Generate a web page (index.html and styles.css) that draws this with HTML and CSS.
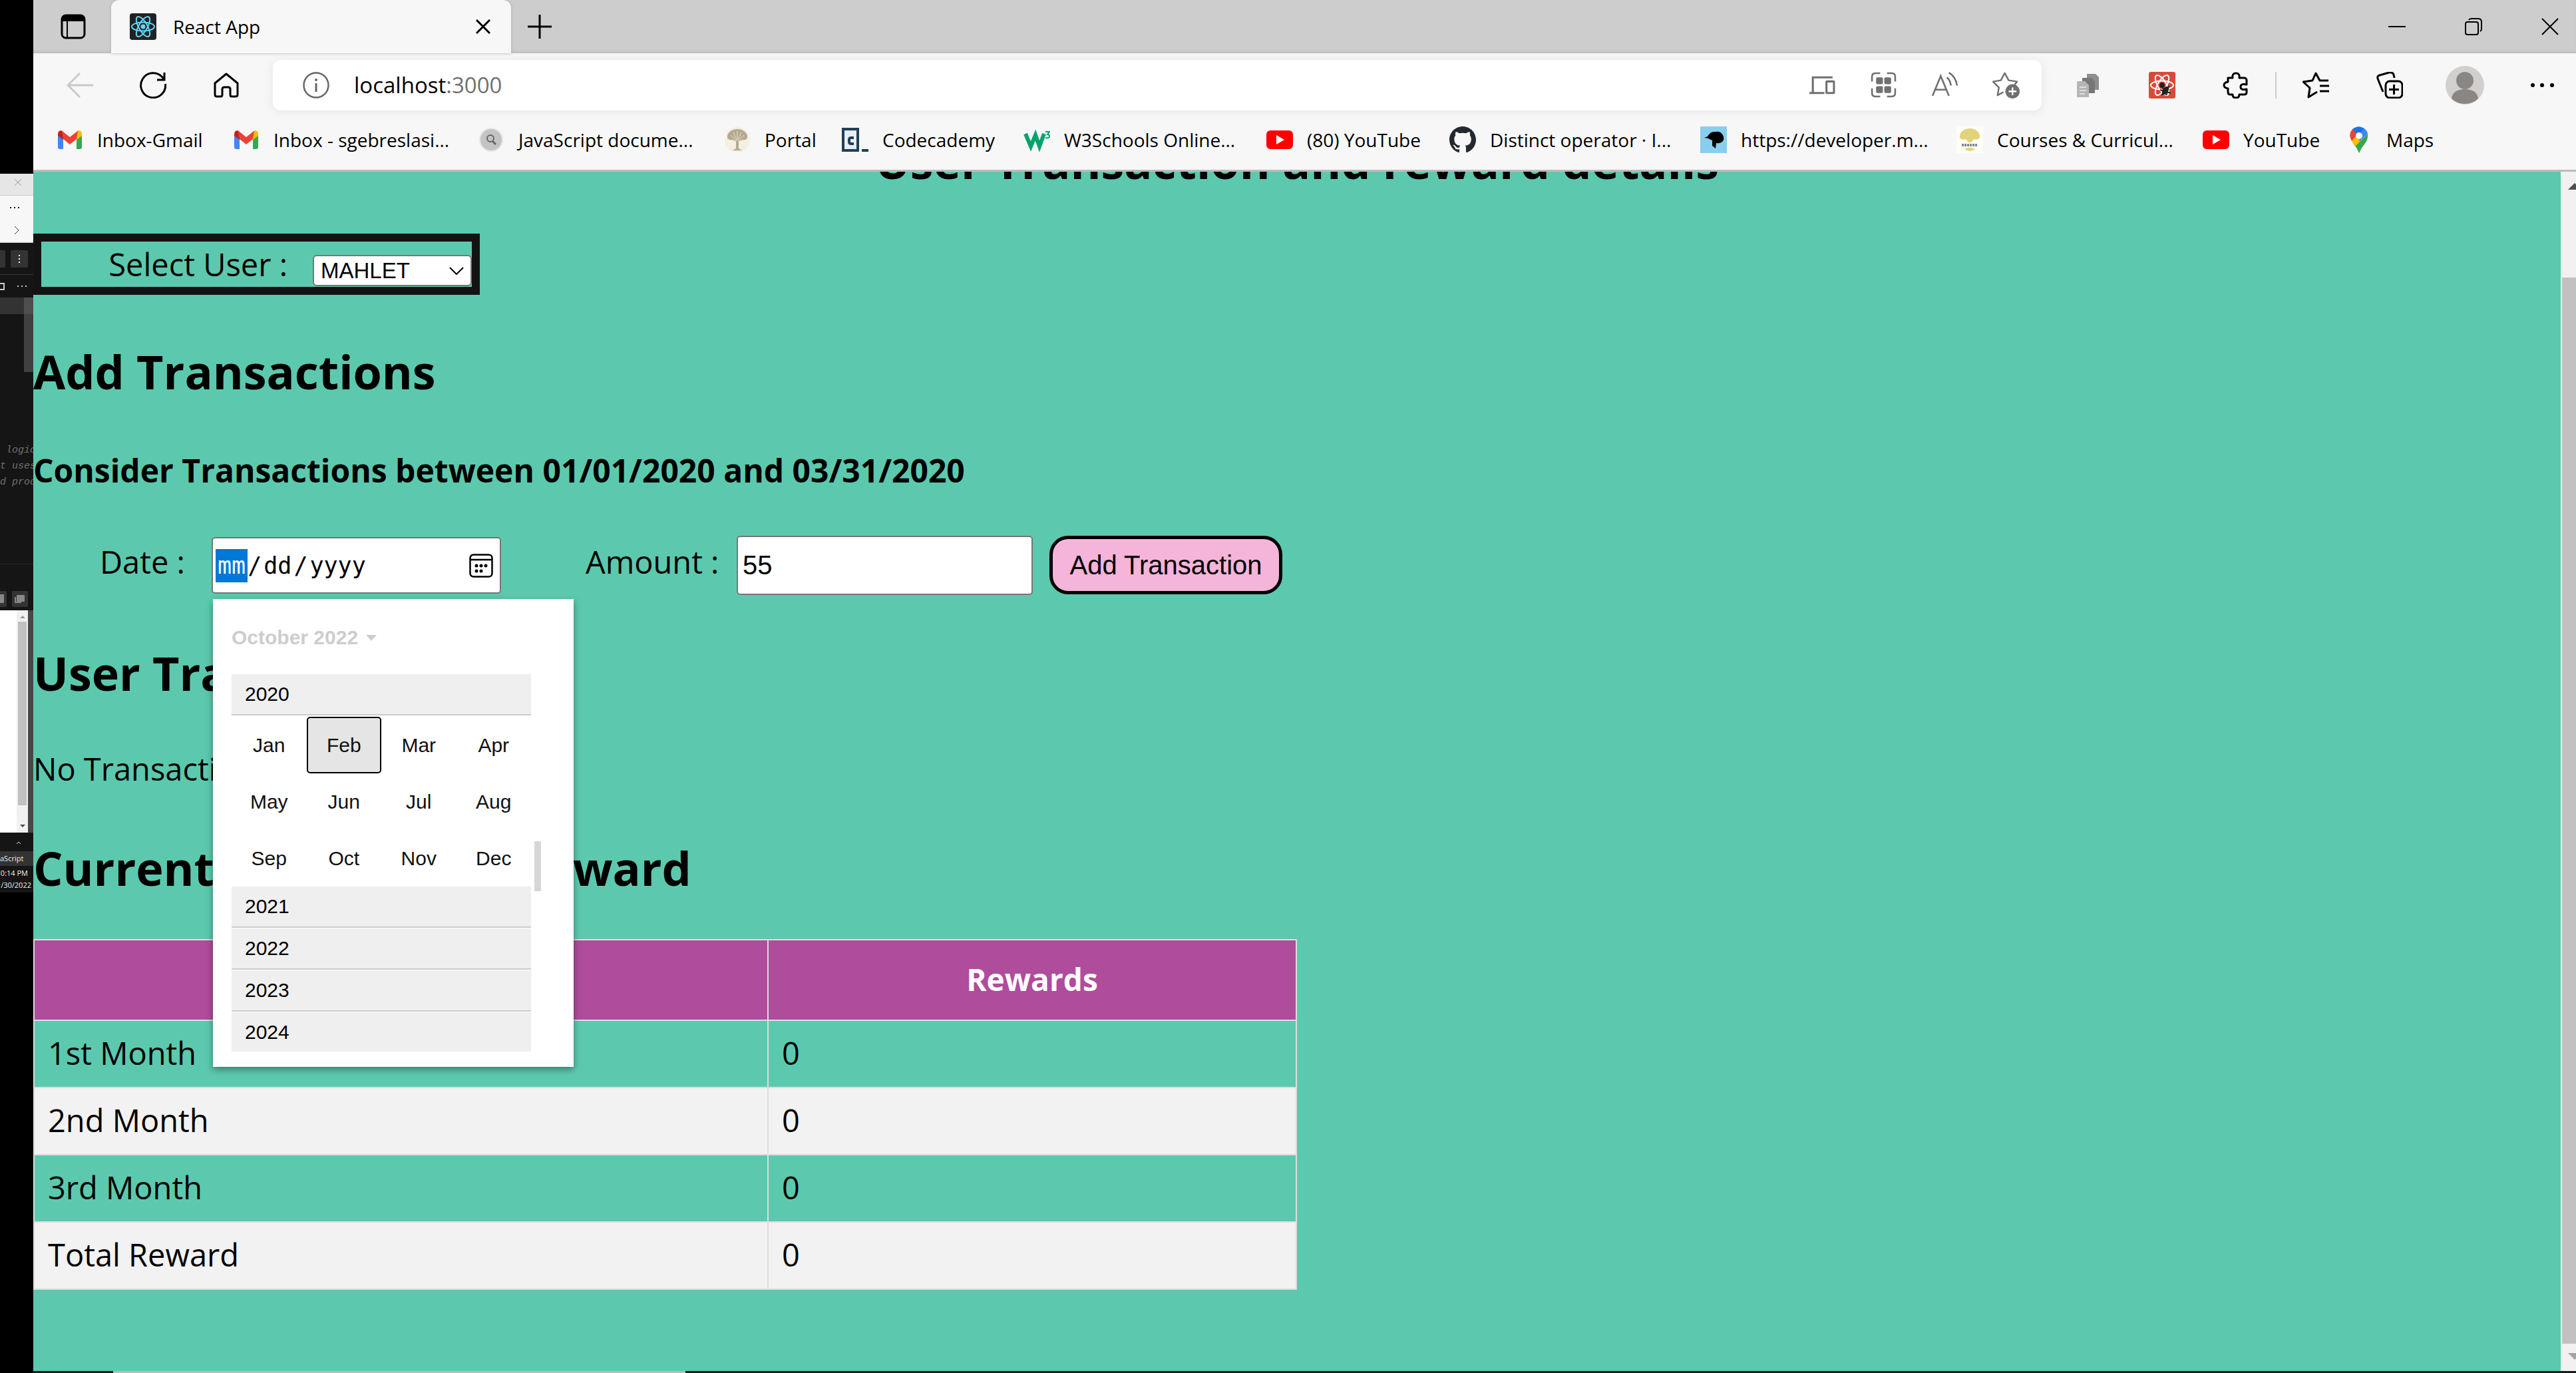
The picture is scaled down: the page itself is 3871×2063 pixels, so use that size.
FILE: index.html
```html
<!DOCTYPE html>
<html lang="en">
<head>
<meta charset="utf-8">
<title>React App</title>
<link rel="stylesheet" href="styles.css">
</head>
<body>
<svg class="defs" aria-hidden="true">
  <symbol id="gmail" viewBox="0 0 40 40"><path fill="#4285f4" d="M2 12v19q0 3 3 3h5V18z"/><path fill="#34a853" d="M38 12v19q0 3-3 3h-5V18z"/><path fill="#c5221f" d="M2 12q0-6 5-6l3 2v12l-8-6z"/><path fill="#fbbc04" d="M38 12q0-6-5-6l-3 2v12l8-6z"/><path fill="#ea4335" d="M8 6.500 20 16 32 6.500 30 19 20 27 10 19z"/></symbol>
  <symbol id="youtube" viewBox="0 0 40 40"><rect y="6" width="40" height="28" rx="6" fill="#f00"/><path fill="#fff" d="M15 13v14l12-7z"/></symbol>
  <symbol id="atom" viewBox="0 0 40 40"><g fill="none" stroke="currentColor" stroke-width="2"><ellipse cx="20" cy="20" rx="17" ry="6.500"/><ellipse cx="20" cy="20" rx="17" ry="6.500" transform="rotate(60 20 20)"/><ellipse cx="20" cy="20" rx="17" ry="6.500" transform="rotate(120 20 20)"/></g><circle cx="20" cy="20" r="3.500" fill="currentColor"/></symbol>
</svg>

<aside class="desktop" aria-label="Editor window">
  <div class="ed-title"><svg viewBox="0 0 10 10" width="10" height="10"><path d="M0 0l10 10M10 0 0 10"/></svg></div>
  <div class="ed-tools"><span class="ed-dots"><i></i><i></i><i></i></span><svg viewBox="0 0 8 14" width="8" height="14"><path d="M1 1l6 6-6 6"/></svg></div>
  <div class="ed-bar"><b class="half"></b><b class="whole"><i></i><i></i><i></i></b></div>
  <div class="ed-sub"><b></b><span class="ed-dots"><i></i><i></i><i></i></span></div>
  <div class="ed-code"><div class="ed-line"></div><div class="ed-scroll"></div><pre> logic
t uses
d prod</pre></div>
  <div class="ed-panel"><b class="half"><i></i></b><b class="whole"><svg viewBox="0 0 24 24" width="24" height="24"><path fill="#888" d="M4 9v9h10v-2H6V9z"/><rect x="7" y="6" width="12" height="10" rx="1" fill="#888"/></svg></b></div>
  <div class="ed-view"><div class="ed-track"><svg viewBox="0 0 8 4" width="8" height="4"><path fill="#999" d="M4 0l4 4H0z"/></svg><i></i><svg viewBox="0 0 8 4" width="8" height="4"><path fill="#444" d="M4 4l4-4H0z"/></svg></div></div>
  <div class="ed-tray"><svg viewBox="0 0 8 5" width="8" height="5"><path d="M1 4l3-3 3 3"/></svg></div>
  <div class="ed-lang">aScript</div>
  <div class="ed-clock"><span>0:14 PM</span><span>/30/2022</span></div>
</aside>

<div class="browser">
  <header class="chrome">
    <div class="tabs">
      <button class="icon-btn tab-actions" aria-label="Tab actions"><svg viewBox="0 0 40 40"><rect x="3" y="3" width="34" height="34" rx="6" fill="none" stroke="#000" stroke-width="3"/><path d="M3 12V9q0-6 6-6h22q6 0 6 6v3z"/><path d="M11 12v25" stroke="#000" stroke-width="2"/></svg></button>
      <div class="tab">
        <span class="favicon"><svg><use href="#atom"/></svg></span>
        <span class="tab-title">React App</span>
        <button class="icon-btn tab-close" aria-label="Close tab"><svg viewBox="0 0 22 22"><path d="M1 1l20 20M21 1 1 21" stroke="#000" stroke-width="3"/></svg></button>
      </div>
      <button class="icon-btn new-tab" aria-label="New tab"><svg viewBox="0 0 36 36"><path d="M18 0v36M0 18h36" stroke="#000" stroke-width="3"/></svg></button>
      <div class="window-controls">
        <button class="icon-btn" aria-label="Minimize"><svg viewBox="0 0 26 26"><path d="M0 13h26" stroke="#000" stroke-width="2"/></svg></button>
        <button class="icon-btn" aria-label="Restore"><svg viewBox="0 0 26 26" fill="none" stroke="#000" stroke-width="2"><rect x="1" y="6" width="19" height="19" rx="3"/><path d="M6 3q1-2 4-2h10q5 0 5 5v10q0 3-2 4"/></svg></button>
        <button class="icon-btn" aria-label="Close"><svg viewBox="0 0 26 26"><path d="M1 1l24 24M25 1 1 25" stroke="#000" stroke-width="2"/></svg></button>
      </div>
    </div>

    <div class="toolbar">
      <button class="icon-btn back" aria-label="Back"><svg viewBox="0 0 40 40" fill="none" stroke="#c9c9c9" stroke-width="3"><path d="M40 20H2M20 2 2 20l18 18"/></svg></button>
      <button class="icon-btn reload" aria-label="Refresh"><svg viewBox="0 0 40 40" fill="none" stroke="#000" stroke-width="3"><path d="M38.500 18A18.500 18.500 0 1 1 34 8l3 4"/><path d="M37 1v11H26"/></svg></button>
      <button class="icon-btn home" aria-label="Home"><svg viewBox="0 0 40 40" fill="none" stroke="#000" stroke-width="3" stroke-linejoin="round"><path d="M20 3 3 17v17q0 3 3 3h6q2 0 2-3v-8q0-3 3-3h6q3 0 3 3v8q0 3 2 3h6q3 0 3-3V17z"/></svg></button>
      <div class="address">
        <svg class="info" viewBox="0 0 40 40"><circle cx="20" cy="20" r="18.500" fill="none" stroke="#666" stroke-width="2.500"/><path d="M20 17v13" stroke="#666" stroke-width="3"/><circle cx="20" cy="12" r="2" fill="#666"/></svg>
        <span class="url">localhost<span class="port">:3000</span></span>
        <div class="address-actions">
          <svg viewBox="0 0 40 40" fill="none" stroke="#707070" stroke-width="3"><path d="M35 9H6v22M1 32h22"/><rect x="26" y="15" width="11" height="17" rx="1"/></svg>
          <svg viewBox="0 0 40 40" fill="none" stroke="#707070" stroke-width="2.500"><path d="M15 3H8Q3 3 3 8v7M25 3h7q5 0 5 5v7M15 37H8q-5 0-5-5v-7M25 37h7q5 0 5-5v-7"/><g fill="#707070" stroke="none"><rect x="9" y="9" width="10" height="10" rx="2"/><rect x="21" y="9" width="10" height="10" rx="2"/><rect x="9" y="22" width="10" height="10" rx="2"/><rect x="21" y="22" width="10" height="10" rx="2"/></g></svg>
          <svg viewBox="0 0 40 40" fill="none" stroke="#707070" stroke-width="2.500"><path d="M2 36 14 7l12 29M6 27h16M23 9q5 4 6 12M26 2q10 6 12 19"/></svg>
          <svg viewBox="0 0 42 42" fill="none" stroke="#707070" stroke-width="2.500" stroke-linejoin="round"><path d="M17 32 8 37l2-12-9-9 12-2 6-11 6 11 13 2-4 5"/><circle cx="31" cy="31" r="11" fill="#707070" stroke="none"/><path d="M31 25v12M25 31h12" stroke="#fff"/></svg>
        </div>
      </div>
      <div class="extensions">
        <button class="icon-btn" aria-label="Documents"><svg viewBox="0 0 40 40"><path fill="#8e8e8e" d="M18 3h13l5 5v19H18z"/><path fill="#777" d="M11 9h14l5 5v18H11z"/><path fill="#b5b5b5" d="M3 14h12l6 6v18H3z"/><path d="M7 23h10M7 28h10M7 33h8" stroke="#ddd" stroke-width="2"/></svg></button>
        <button class="icon-btn" aria-label="React Developer Tools"><span class="react-dev"><svg><use href="#atom"/></svg><svg class="bug" viewBox="0 0 40 40"><ellipse cx="25" cy="28" rx="4" ry="7" fill="#222" transform="rotate(35 25 28)"/><circle cx="20" cy="20" r="4" fill="#222"/><path d="M17 27l16 5M19 35l12-14M27 35l-8-14" stroke="#222" stroke-width="2"/></svg></span></button>
        <button class="icon-btn" aria-label="Extensions"><svg viewBox="0 0 40 40" fill="none" stroke="#000" stroke-width="3" stroke-linejoin="round"><path d="M8 9h7q-1-7 5-7t5 7h7q4 0 4 4v6q-9-2-9 3.500T36 26v5q0 3-4 3h-7q0 5-5 5t-5-5H11q-3 0-3-4v-5q-6-1-6-5t6-5z"/></svg></button>
        <i class="divider"></i>
        <button class="icon-btn" aria-label="Favorites"><svg viewBox="0 0 40 40" fill="none" stroke="#000" stroke-width="3" stroke-linejoin="round"><path d="M22 30 9 38l2-14-10-9 14-2 5-11 6 11h13M26 21h14M26 29h14"/></svg></button>
        <button class="icon-btn" aria-label="Collections"><svg viewBox="0 0 40 40" fill="none" stroke="#000" stroke-width="3" stroke-linejoin="round"><path d="M10 30 2 10q-1-4 3-5l14-4q5-1 7 3l1 5"/><rect x="14" y="14" width="25" height="25" rx="6"/><path d="M26.500 19v15M19 26.500h15"/></svg></button>
        <button class="icon-btn avatar" aria-label="Profile"><svg viewBox="0 0 58 58"><circle cx="29" cy="29" r="29" fill="#d2d0ce"/><circle cx="29" cy="22" r="13" fill="#8a8684"/><path fill="#8a8684" d="M9 49q2-14 20-14t20 14q-8 8-20 8T9 49z"/></svg></button>
        <button class="icon-btn" aria-label="Settings and more"><svg viewBox="0 0 40 40"><circle cx="5" cy="20" r="3"/><circle cx="19" cy="20" r="3"/><circle cx="34" cy="20" r="3"/></svg></button>
      </div>
    </div>

    <nav class="bookmarks" aria-label="Favorites bar">
      <a href="#"><svg><use href="#gmail"/></svg>Inbox-Gmail</a>
      <a href="#"><svg><use href="#gmail"/></svg>Inbox - sgebreslasi...</a>
      <a href="#"><svg viewBox="0 0 40 40"><circle cx="20" cy="20" r="17" fill="#c4c4c4" stroke="#e6e6e6" stroke-width="2"/><circle cx="19" cy="18" r="5" fill="none" stroke="#666" stroke-width="2"/><path d="M22 22l5 5" stroke="#666" stroke-width="3"/></svg>JavaScript docume...</a>
      <a href="#"><svg viewBox="0 0 40 40"><circle cx="20" cy="20" r="19" fill="#f5efe2"/><path fill="#b3aa8f" d="M20 4c9 0 16 6 15 13q-2 4-7 3l-6 2v11l5 3H13l5-3V22l-6-2q-5 1-7-3C4 10 11 4 20 4z"/><path d="M10 13l9 9M30 13l-9 9M20 7v14M14 9l5 11M26 9l-5 11" stroke="#e7dfca"/></svg>Portal</a>
      <a href="#"><svg viewBox="0 0 40 40"><rect x="2" y="4" width="22" height="32" fill="#e9eef2" stroke="#204056" stroke-width="4"/><path d="M18 17h-4q-3 0-3 3v3q0 3 3 3h4M30 36h10" fill="none" stroke="#204056" stroke-width="4"/></svg>Codecademy</a>
      <a href="#"><svg viewBox="0 0 40 40" fill="none" stroke="#04a36c"><path stroke-width="6" d="M3 11l8 19 7-17 6 17 7-19"/><path stroke-width="2" d="M33 8h6l-3 4q3 0 3 3t-6 2"/></svg>W3Schools Online...</a>
      <a href="#"><svg><use href="#youtube"/></svg>(80) YouTube</a>
      <a href="#"><svg viewBox="0 0 16 16"><path fill="#24292f" d="M8 0C3.580 0 0 3.580 0 8c0 3.540 2.290 6.530 5.470 7.590.4.070.55-.17.55-.38 0-.19-.01-.82-.01-1.490-2.010.37-2.530-.49-2.690-.94-.09-.23-.48-.94-.82-1.130-.28-.15-.68-.52-.01-.53.63-.01 1.080.58 1.230.82.72 1.210 1.870.87 2.330.66.07-.52.28-.87.51-1.070-1.780-.2-3.640-.89-3.640-3.950 0-.87.31-1.590.82-2.150-.08-.2-.36-1.020.08-2.120 0 0 .67-.21 2.200.82.64-.18 1.320-.27 2-.27s1.360.09 2 .27c1.530-1.040 2.200-.82 2.200-.82.44 1.100.16 1.920.08 2.120.51.56.82 1.270.82 2.150 0 3.070-1.870 3.750-3.650 3.950.29.25.54.73.54 1.480 0 1.070-.01 1.930-.01 2.200 0 .21.15.46.55.38A8.010 8.010 0 0 0 16 8c0-4.420-3.580-8-8-8z"/></svg>Distinct operator · I...</a>
      <a href="#"><svg viewBox="0 0 40 40"><path fill="#87ceef" d="M0 0h40v40H0z"/><path d="M6 17l5-2q4-8 12-7 8-1 11 5 3 6-1 10-4 3-9 2l-1 8-5-4v-8l-6-3z"/></svg>https://developer.m...</a>
      <a href="#"><svg viewBox="0 0 40 40"><path fill="#fffef4" d="M0 0h40v40H0z"/><path fill="#e2d27a" d="M20 3c10 0 16 7 15 14q-4 4-9 2l-4 5h-4l-4-5q-5 2-9-2C4 10 10 3 20 3zM12 34q8-5 16 0-8 6-16 0z"/><path d="M8 28h24" stroke="#7d8798" stroke-width="4" stroke-dasharray="3 1"/></svg>Courses &amp; Curricul...</a>
      <a href="#"><svg><use href="#youtube"/></svg>YouTube</a>
      <a href="#"><svg viewBox="0 0 40 40"><path fill="#34a853" d="M33 11q1 7-3 13-6 7-10 16-3-7-6-11z"/><path fill="#fbbc04" d="M9 22l7-12 9 9-11 11q-3-4-5-8z"/><path fill="#ea4335" d="M9 22Q3 12 10 4l8 7z"/><path fill="#1a73e8" d="M10 4q9-7 18-1l-9 11z"/><path fill="#4285f4" d="M28 3q4 3 5 8L21 22l-4-8z"/><circle cx="20" cy="14" r="5" fill="#fff"/></svg>Maps</a>
    </nav>
  </header>

  <div class="viewport">
    <main class="page">
      <h1>User Transaction and reward details</h1>
      <div class="user-box">
        <label for="user">Select User :</label>
        <select id="user"><option>MAHLET</option></select>
      </div>
      <h2>Add Transactions</h2>
      <h3>Consider Transactions between 01/01/2020 and 03/31/2020</h3>
      <form class="entry">
        <label for="date">Date :</label>
        <div class="date-field">
          <input type="date" id="date">
          <div class="picker">
            <div class="picker-head">October 2022 <svg viewBox="0 0 16 9" width="16" height="9"><path fill="#cdcdcd" d="M0 0h16L8 9z"/></svg></div>
            <div class="picker-body">
              <div class="years">
                <div class="year">2020</div>
                <div class="months">
                  <button type="button">Jan</button><button type="button" class="current">Feb</button><button type="button">Mar</button><button type="button">Apr</button>
                  <button type="button">May</button><button type="button">Jun</button><button type="button">Jul</button><button type="button">Aug</button>
                  <button type="button">Sep</button><button type="button">Oct</button><button type="button">Nov</button><button type="button">Dec</button>
                </div>
                <div class="year">2021</div>
                <div class="year">2022</div>
                <div class="year">2023</div>
                <div class="year">2024</div>
              </div>
              <i class="picker-thumb"></i>
            </div>
          </div>
        </div>
        <label for="amount" class="amount-label">Amount :</label>
        <input type="text" id="amount" value="55">
        <button type="button" class="add">Add Transaction</button>
      </form>
      <h2>User Transactions</h2>
      <p>No Transactions</p>
      <h2>Current Transaction Reward</h2>
      <table>
        <thead><tr><th>Month</th><th>Rewards</th></tr></thead>
        <tbody>
          <tr><td>1st Month</td><td>0</td></tr>
          <tr><td>2nd Month</td><td>0</td></tr>
          <tr><td>3rd Month</td><td>0</td></tr>
          <tr><td>Total Reward</td><td>0</td></tr>
        </tbody>
      </table>
    </main>
    <div class="scrollbar"><i class="up"></i><i class="thumb"></i><i class="down"></i></div>
  </div>
  <div class="taskbar"><i></i></div>
</div>
</body>
</html>
```
FILE: styles.css
```css
* { box-sizing: border-box; }

body {
  margin: 0;
  display: flex;
  height: 100vh;
  overflow: hidden;
  background: #000;
  color: #000;
  font-family: "Open Sans", sans-serif;
}

.defs { position: absolute; width: 0; height: 0; }
button, input, select { font-family: "Liberation Sans", Arial, sans-serif; color: #000; }
svg { display: block; flex: none; }

/* Editor window peeking out on the left */
.desktop {
  flex: none;
  width: 50px;
  overflow: hidden;
  padding-top: 261px;
  display: flex;
  flex-direction: column;
}
.desktop > div { flex: none; }
.desktop path { stroke-width: 1; }
.ed-title { height: 33px; background: #e6e6e6; border-bottom: 1px solid #ccc; padding: 8px 0 0 22px; }
.ed-title svg { fill: none; stroke: #999; }
.ed-tools { height: 71px; background: #f7f7f7; border-bottom: 1px solid #bbb; padding: 17px 0 0 15px; }
.ed-tools svg { fill: none; stroke: #333; margin: 26px 0 0 6px; }
.ed-dots { display: flex; gap: 4px; color: #111; }
.ed-dots i { width: 2px; height: 2px; background: currentColor; }
.ed-bar { height: 48px; background: #151515; border-bottom: 1px solid #333; display: flex; gap: 8px; padding-top: 11px; }
.half { width: 8px; height: 26px; background: #333; border-radius: 0 2px 2px 0; }
.whole { width: 26px; height: 26px; background: #333; border-radius: 2px; }
.ed-bar .whole { display: flex; flex-direction: column; align-items: center; justify-content: center; gap: 3px; }
.ed-bar .whole i { width: 2px; height: 2px; background: #fff; }
.ed-sub { height: 34px; background: #151515; display: flex; align-items: center; gap: 19px; }
.ed-sub b { width: 7px; height: 11px; border: 2px solid #ccc; border-left: 0; }
.ed-sub .ed-dots { color: #ccc; }
.ed-code { position: relative; height: 401px; background: #151515; border-bottom: 1px solid #2b2b2b; }
.ed-line { height: 25px; background: #333; }
.ed-scroll { position: absolute; top: 0; left: 36px; width: 14px; height: 112px; background: #404040; border-top: 25px solid #4f4f4f; }
.ed-code pre { margin: 193px 0 0; font: italic 15px/24px "Liberation Mono", monospace; color: #707070; }
.ed-panel { height: 69px; background: #151515; display: flex; align-items: flex-end; gap: 8px; padding-bottom: 5px; }
.ed-panel .half { width: 10px; height: 24px; padding-top: 5px; }
.ed-panel .half i { display: block; width: 6px; height: 13px; background: #888; }
.ed-panel .whole { width: 24px; height: 24px; }
.ed-view { height: 334px; background: #fff; border-right: 8px solid #484848; display: flex; justify-content: flex-end; }
.ed-track { width: 17px; background: #f1f1f1; display: flex; flex-direction: column; align-items: center; padding: 8px 0; gap: 5px; }
.ed-track i { width: 13px; height: 276px; background: #c1c1c1; margin-bottom: auto; }
.ed-tray { height: 28px; background: #151515; padding: 13px 0 0 24px; }
.ed-tray svg { fill: none; stroke: #ddd; }
.ed-lang, .ed-clock { color: #eee; font-size: 11px; line-height: 18px; }
.ed-lang { height: 22px; background: #333; padding: 2px 15px 0 0; text-align: right; }
.ed-clock { height: 40px; background: #151515; display: flex; flex-direction: column; align-items: flex-end; padding: 2px 3px 0 0; white-space: nowrap; }
.ed-clock span:first-child { padding-right: 5px; }

/* Browser frame */
.browser { flex: 1; min-width: 0; display: flex; flex-direction: column; background: #5cc9ae; }
.chrome { position: relative; z-index: 2; flex: none; background: #f7f7f7; border-bottom: 3px solid #bcbcbc; }
.icon-btn { border: 0; padding: 0; background: none; flex: none; width: 40px; height: 40px; }
.icon-btn svg { width: 100%; height: 100%; }

.tabs { height: 80px; background: #cdcdcd; display: flex; align-items: center; box-shadow: inset 0 -3px 3px -1px #bbb; }
.tab-actions { margin: 0 37px 0 40px; }
.tab {
  align-self: stretch;
  width: 601px;
  padding: 0 31px 0 28px;
  display: flex;
  align-items: center;
  background: #f7f7f7;
  border-radius: 12px 12px 0 0;
  box-shadow: 0 0 4px #aaa;
}
.favicon { width: 40px; height: 40px; border-radius: 4px; background: #222; color: #61dafb; }
.favicon svg, .react-dev svg { width: 40px; height: 40px; }
.tab-title { flex: 1; margin-left: 25px; font-size: 28px; }
.tab-close { width: 22px; height: 22px; }
.new-tab { width: 36px; height: 36px; margin-left: 25px; }
.window-controls { margin-left: auto; padding-right: 26px; display: flex; gap: 89px; }
.window-controls .icon-btn { width: 26px; height: 26px; }

.toolbar { display: flex; align-items: center; height: 95px; padding: 0 30px 0 50px; }
.reload { margin-left: 70px; }
.home { margin: 0 50px 0 70px; }
.address {
  flex: 1;
  height: 76px;
  display: flex;
  align-items: center;
  background: #fff;
  border-radius: 12px;
  box-shadow: 0 2px 14px #e4e4e4;
  padding: 0 33px 0 45px;
}
.info { width: 40px; height: 40px; }
.url { margin-left: 37px; font-size: 33px; }
.port { color: #707070; }
.address-actions { margin-left: auto; display: flex; gap: 51px; }
.address-actions svg { width: 41px; height: 41px; }
.extensions { display: flex; align-items: center; margin-left: 50px; gap: 71px; }
.divider { width: 2px; height: 40px; background: #ccc; margin: 0 -32px; }
.avatar { width: 58px; height: 58px; margin: 0 -3px 0 -7px; }
.react-dev { display: block; position: relative; background: #d94a3a; color: #fff; border-radius: 3px; }
.react-dev .bug { position: absolute; inset: 0; }

.bookmarks {
  display: grid;
  grid-template-columns: 265px 368px 370px 177px 273px 365px 275px 377px 385px 370px 215px auto;
  padding: 0 0 10px 35px;
  height: 80px;
  align-items: center;
}
.bookmarks a {
  display: flex;
  align-items: center;
  gap: 21px;
  color: #000;
  font-size: 28px;
  text-decoration: none;
  white-space: nowrap;
}
.bookmarks svg { width: 40px; height: 40px; }

/* Page */
.viewport { flex: 1; min-height: 0; display: flex; overflow: hidden; }
.page { flex: 1; min-width: 0; margin-top: -66px; font-size: 47px; line-height: 68px; }
h1, h2 { font-size: 70px; line-height: 100px; font-weight: 700; }
h1 { margin: 0 0 59px; text-align: center; }
h2 { margin: 65px 0 60px; }
h3 { margin: 65px 0 64px; font-size: 48px; line-height: 68px; }
p { margin: 60px 0 64px; }

.user-box {
  width: 671px;
  height: 92px;
  border: 12px solid #131313;
  display: flex;
  justify-content: flex-end;
  align-items: flex-start;
}
.user-box label { margin-right: 38px; }
select {
  appearance: none;
  width: 239px;
  height: 47px;
  margin-top: 20px;
  padding: 0 10px;
  font-size: 33px;
  border: 2px solid #767676;
  border-radius: 6px;
  background: #fff url("data:image/svg+xml,%3Csvg xmlns='http://www.w3.org/2000/svg' viewBox='0 0 22 12'%3E%3Cpath d='M1 1l10 10L21 1' fill='none' stroke='%23000' stroke-width='2'/%3E%3C/svg%3E") no-repeat right 10px center / 22px 12px;
}

.entry { display: flex; align-items: flex-start; height: 89px; margin: 0 0 67px; padding-left: 100px; }
.entry label { flex: none; width: 168px; line-height: 78px; }
.entry .amount-label { width: 227px; margin-left: 127px; }
.date-field { position: relative; width: 435px; margin-top: 2px; }
input { border: 2px solid #767676; border-radius: 5px; background: #fff; outline: 0; font-size: 40px; }
#date { display: block; width: 100%; height: 85px; padding: 0 10px 0 4px; font-family: "DejaVu Sans Mono", monospace; font-size: 35px; }
#date::-webkit-datetime-edit-fields-wrapper { display: flex; align-items: center; }
#date::-webkit-datetime-edit-month-field { padding: 5px 3px; background: #0078d7; color: #fff; }
#date::-webkit-datetime-edit-day-field, #date::-webkit-datetime-edit-year-field { padding: 5px 3px; color: #000; }
#date::-webkit-calendar-picker-indicator {
  width: 36px;
  height: 36px;
  padding: 0;
  background: url("data:image/svg+xml,%3Csvg xmlns='http://www.w3.org/2000/svg' viewBox='0 0 36 36'%3E%3Crect x='1.500' y='1.500' width='33' height='33' rx='5' fill='none' stroke='%23000' stroke-width='2.500'/%3E%3Cpath d='M2 9h32' stroke='%23000' stroke-width='2.500'/%3E%3Cg fill='%23000'%3E%3Ccircle cx='11' cy='18' r='2.500'/%3E%3Ccircle cx='18' cy='18' r='2.500'/%3E%3Ccircle cx='25' cy='18' r='2.500'/%3E%3Ccircle cx='11' cy='26' r='2.500'/%3E%3Ccircle cx='18' cy='26' r='2.500'/%3E%3C/g%3E%3C/svg%3E") center / contain no-repeat;
}
#amount { width: 445px; height: 89px; padding: 0 7px; }
.add {
  width: 350px;
  height: 88px;
  margin-left: 25px;
  padding: 0;
  font-size: 40px;
  white-space: nowrap;
  background: #f5b4d9;
  border: 5px solid #000;
  border-radius: 28px;
}

/* Month picker */
.picker {
  position: absolute;
  top: 93px;
  left: 2px;
  width: 542px;
  height: 703px;
  padding: 41px 28px 0;
  background: #fff;
  box-shadow: 0 4px 10px rgba(0, 0, 0, .4);
  font: 30px/34px "Liberation Sans", Arial, sans-serif;
}
.picker-head { display: flex; align-items: center; gap: 12px; color: #cdcdcd; font-weight: 700; }
.picker-body { display: flex; align-items: flex-start; gap: 5px; margin-top: 38px; }
.years { width: 450px; height: 567px; overflow: hidden; }
.year { height: 62px; padding: 13px 20px; background: #efefef; border-bottom: 2px solid #ccc; margin-bottom: 1px; }
.months { display: grid; grid-template-columns: repeat(4, 1fr); grid-auto-rows: 85px; padding: 1px 0 0; }
.months button { padding: 0; border: 0; background: none; font-size: 30px; color: #101010; }
.months .current { background: #e5e5e5; border: 2px solid #000; border-radius: 5px; }
.picker-thumb { width: 10px; height: 75px; margin-top: 251px; background: #d6d6d6; }

/* Rewards table */
table { width: 1899px; margin-top: -3px; border-collapse: collapse; table-layout: fixed; font-size: 47px; line-height: 60px; }
th, td { border: 2px solid #ddd; padding: 18px 20px 21px; text-align: left; }
th { padding: 28px 20px 31px; background: #af4c9c; color: #fff; font-size: 46px; text-align: center; }
th:first-child { width: 1103px; }
tr:nth-child(even) { background: #f2f2f2; }

.scrollbar { width: 23px; background: #f1f1f1; overflow: hidden; display: flex; flex-direction: column; padding-left: 2px; }
.scrollbar i { flex: none; }
.up { margin: 17px 0 0 9px; width: 20px; height: 10px; background: #505050; clip-path: polygon(50% 0, 100% 100%, 0 100%); }
.scrollbar .thumb { flex: 1; margin: 132px 0 14px; background: #c1c1c1; }
.down { margin: 0 0 17px 9px; width: 20px; height: 10px; background: #a3a3a3; clip-path: polygon(0 0, 100% 0, 50% 100%); }
.taskbar { flex: none; height: 3px; background: #1b1b1b; padding-left: 120px; }
.taskbar i { display: block; width: 860px; height: 3px; background: #bbb; }
```
